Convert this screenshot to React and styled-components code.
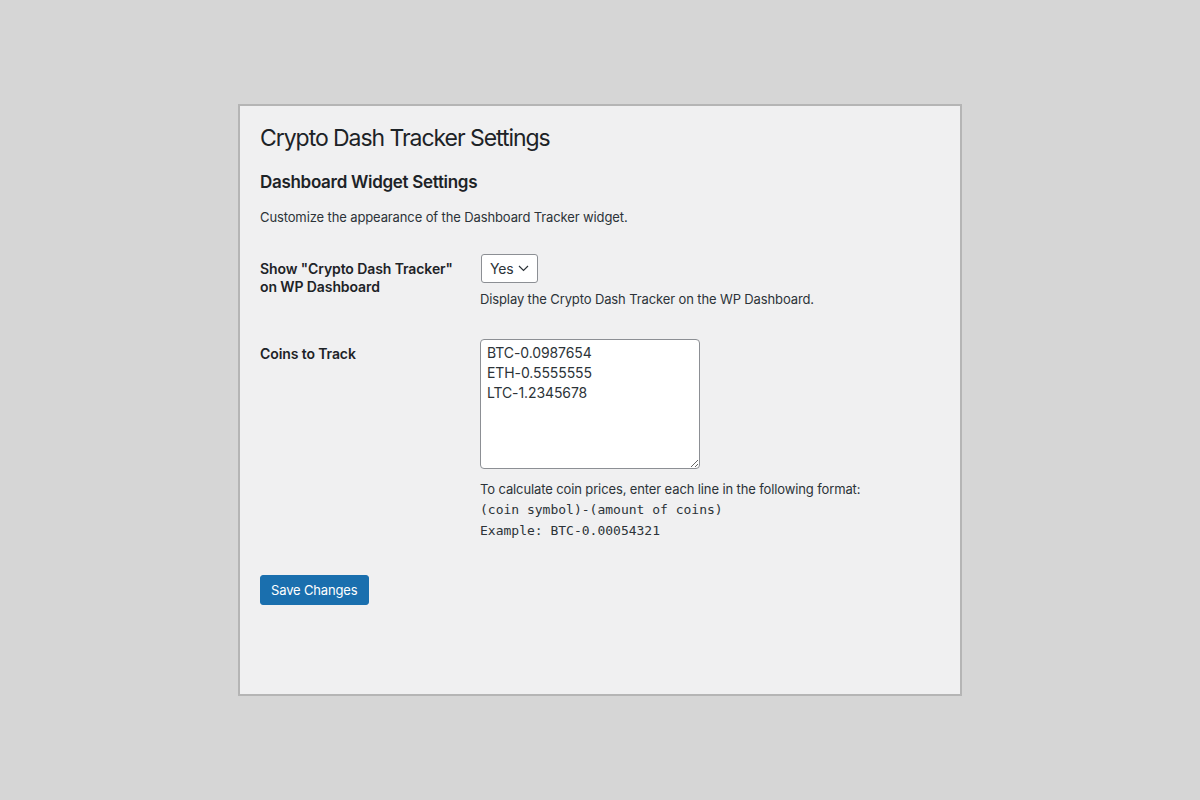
import React from "react";
import styled, { createGlobalStyle } from "styled-components";

const Global = createGlobalStyle`
  html, body { margin: 0; padding: 0; }
  body {
    background: #d6d6d6;
    font-family: Inter, "Noto Sans", "Liberation Sans", sans-serif;
    color: #1d2327;
  }
`;

const Stage = styled.div`
  min-height: 100vh;
  display: flex;
  align-items: center;
  justify-content: center;
`;

const Panel = styled.div`
  box-sizing: border-box;
  width: 724px;
  height: 592px;
  background: #f0f0f1;
  border: 2px solid #b5b5b5;
  padding: 17px 20px 0;
`;

const Title = styled.h1`
  margin: 0;
  font-size: 23px;
  font-weight: 400;
  line-height: 30px;
  letter-spacing: -1.05px;
  color: #1d2327;
`;

const Subtitle = styled.h2`
  margin: 17px 0 0;
  font-size: 17px;
  font-weight: 600;
  line-height: 24px;
  letter-spacing: -0.3px;
  color: #1d2327;
`;

const Intro = styled.p`
  margin: 13px 0 0;
  font-size: 13px;
  line-height: 20px;
  letter-spacing: -0.12px;
  color: #2c3338;
`;

const FormTable = styled.div`
  margin-top: 14px;
  display: grid;
  grid-template-columns: 220px 1fr;
`;

const Label = styled.div`
  padding: ${(p) => p.$top || 19}px 20px 20px 0;
  font-size: 14px;
  font-weight: 600;
  line-height: 18px;
  letter-spacing: -0.1px;
  color: #1d2327;
`;

const Field = styled.div`
  padding: ${(p) => p.$top || 15}px 0 15px;
`;

const SelectBox = styled.div`
  box-sizing: border-box;
  display: inline-flex;
  align-items: center;
  gap: 5px;
  height: 29px;
  padding: 0 8px 0 8px;
  border: 1px solid #8c8f94;
  border-radius: 3px;
  background: #fff;
  font-size: 14px;
  letter-spacing: -0.2px;
  color: #2c3338;
  margin-left: 1px;
`;

const Description = styled.p`
  margin: ${(p) => p.$top || 4}px 0 0;
  font-size: 13px;
  line-height: 20px;
  letter-spacing: -0.12px;
  color: #2c3338;
`;

const CoinsArea = styled.textarea`
  display: block;
  box-sizing: border-box;
  width: 220px;
  height: 130px;
  margin: 0;
  padding: 3px 6px;
  border: 1px solid #8c8f94;
  border-radius: 4px;
  background: #fff;
  font-family: inherit;
  font-size: 14px;
  line-height: 20px;
  letter-spacing: -0.1px;
  color: #2c3338;
  resize: both;
  outline: none;
`;

const HelpBlock = styled.div`
  margin-top: 10px;
  font-size: 13px;
  color: #2c3338;
`;

const HelpLine = styled.div`
  line-height: ${(p) => p.$h || 20}px;
  font-family: ${(p) =>
    p.$mono ? '"DejaVu Sans Mono", "Liberation Mono", monospace' : "inherit"};
  font-size: 13px;
  letter-spacing: ${(p) => (p.$mono ? "0" : "-0.12px")};
`;

const SaveButton = styled.button`
  margin-top: 18px;
  height: 30px;
  padding: 0 10px;
  border: 1px solid #1a6fae;
  border-radius: 3px;
  background: #1a6fae;
  color: #fff;
  font-family: inherit;
  font-size: 13px;
  letter-spacing: -0.15px;
  cursor: pointer;
`;

const Chevron = () => (
  <svg width="11" height="7" viewBox="0 0 11 7" fill="none">
    <path d="M1 1l4.5 4.5L10 1" stroke="#2c3338" strokeWidth="1.2" />
  </svg>
);

export default function App() {
  return (
    <>
      <Global />
      <Stage>
        <Panel>
          <Title>Crypto Dash Tracker Settings</Title>
          <Subtitle>Dashboard Widget Settings</Subtitle>
          <Intro>Customize the appearance of the Dashboard Tracker widget.</Intro>
          <FormTable>
            <Label>
              Show "Crypto Dash Tracker"
              <br />
              on WP Dashboard
            </Label>
            <Field $top={13}>
              <SelectBox>
                Yes <Chevron />
              </SelectBox>
              <Description $top={6}>
                Display the Crypto Dash Tracker on the WP Dashboard.
              </Description>
            </Field>
            <Label $top={21}>Coins to Track</Label>
            <Field>
              <CoinsArea
                defaultValue={"BTC-0.0987654\nETH-0.5555555\nLTC-1.2345678"}
              />
              <HelpBlock>
                <HelpLine>
                  To calculate coin prices, enter each line in the following format:
                </HelpLine>
                <HelpLine $mono $h={21}>(coin symbol)-(amount of coins)</HelpLine>
                <HelpLine $mono $h={22}>Example: BTC-0.00054321</HelpLine>
              </HelpBlock>
            </Field>
          </FormTable>
          <SaveButton>Save Changes</SaveButton>
        </Panel>
      </Stage>
    </>
  );
}
